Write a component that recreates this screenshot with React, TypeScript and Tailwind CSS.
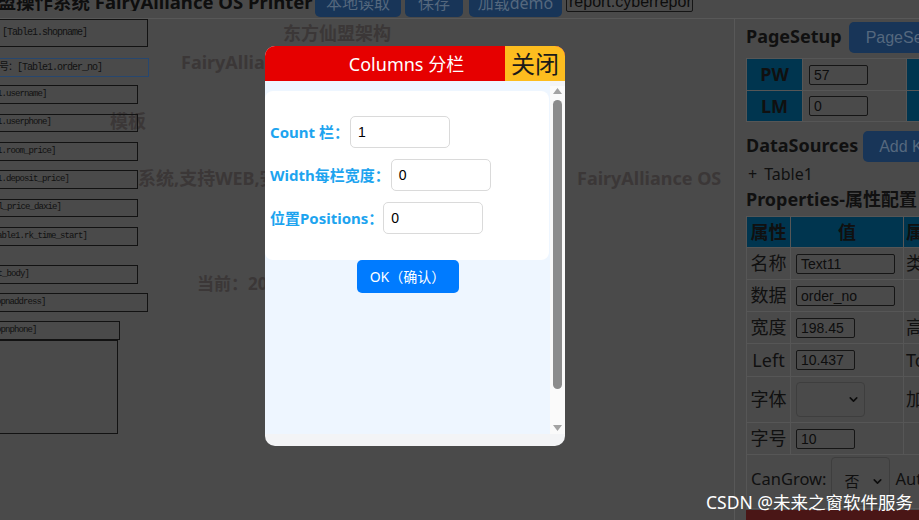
import React from "react";
import { ChevronDown } from "lucide-react";

type Box = { l: number; t: number; w: number; h: number; text: string; fs: number; blue?: boolean; top?: boolean };

const boxes: Box[] = [
  { l: -1, t: 19, w: 149, h: 28, text: "[Table1.shopname]", fs: 10, top: true },
  { l: -22, t: 58, w: 171, h: 19, text: "订单号：[Table1.order_no]", fs: 10, blue: true },
  { l: -33, t: 85, w: 171, h: 19, text: "[Table1.username]", fs: 9 },
  { l: -33, t: 114, w: 171, h: 18, text: "[Table1.userphone]", fs: 9 },
  { l: -33, t: 142, w: 171, h: 19, text: "[Table1.room_price]", fs: 9 },
  { l: -33, t: 170, w: 171, h: 19, text: "[Table1.deposit_price]", fs: 9 },
  { l: -59, t: 199, w: 197, h: 18, text: "[Table1.total_price_daxie]", fs: 9 },
  { l: -15, t: 227, w: 153, h: 19, text: "[Table1.rk_time_start]", fs: 9 },
  { l: -55, t: 265, w: 193, h: 19, text: "[Table1.rent_body]", fs: 9 },
  { l: -52, t: 293, w: 200, h: 19, text: "[Table1.shopnaddress]", fs: 9 },
  { l: -52, t: 321, w: 172, h: 19, text: "[Table1.shopnphone]", fs: 9 },
  { l: -52, t: 340, w: 170, h: 94, text: "", fs: 9 },
];

type Lbl = { l: number; t: number; text: string; fs: number };
const labels: Lbl[] = [
  { l: 283, t: 24, text: "东方仙盟架构", fs: 18 },
  { l: 181, t: 53, text: "FairyAlliance OS 东方仙盟", fs: 18 },
  { l: 110, t: 112, text: "模板", fs: 18 },
  { l: 138, t: 169, text: "系统,支持WEB,安卓,鸿蒙", fs: 18 },
  { l: 577, t: 169, text: "FairyAlliance OS", fs: 18 },
  { l: 197, t: 275, text: "当前：2024", fs: 17 },
];

const sans = "font-['Noto_Sans','Noto_Sans_CJK_SC',sans-serif]";

function PInput({ v, w }: { v: string; w: number }) {
  return (
    <div
      className="h-[20px] border border-[#151515] rounded-[2px] pl-[4px] text-[14px] leading-[18px] text-[#0d0d0d] overflow-hidden whitespace-nowrap font-['Liberation_Sans',sans-serif]"
      style={{ width: w }}
    >
      {v}
    </div>
  );
}

function ModalRow({ label, value, gap }: { label: string; value: string; gap: number }) {
  return (
    <div className="flex items-center">
      <span className="text-[15px] font-bold text-[#1da4ef] whitespace-nowrap">{label}</span>
      <div
        className="w-[100px] h-[32px] border border-[#dadada] rounded-[5px] pl-[7px] flex items-center text-[14px] text-black font-['Liberation_Sans',sans-serif] bg-white"
        style={{ marginLeft: gap }}
      >
        {value}
      </div>
    </div>
  );
}

export default function App() {
  return (
    <div className={`relative w-[919px] h-[520px] overflow-hidden bg-[#4a4a4a] ${sans}`}>
      {/* header bar */}
      <div className="relative h-[19px] border-b border-[#585858] flex items-end overflow-hidden">
        <div className="w-[315px] shrink-0 self-start -mt-[7px] whitespace-nowrap overflow-hidden">
          <span className="block -ml-[58px] text-[18.5px] leading-[18px] font-bold text-[#0e0e0e]">
            东方仙盟操作系统 FairyAlliance OS Printer
          </span>
        </div>
        <div className="flex items-end gap-[4px] mb-[1px]">
          <div className="w-[86px] h-[30px] rounded-[5px] bg-[#183558] text-[#55687e] text-[16px] leading-[16px] flex items-end justify-center pb-[6px]">本地读取</div>
          <div className="w-[58px] h-[30px] rounded-[5px] bg-[#183558] text-[#55687e] text-[16px] leading-[16px] flex items-end justify-center pb-[6px] mr-[2px]">保存</div>
          <div className="w-[93px] h-[30px] rounded-[5px] bg-[#183558] text-[#55687e] text-[16px] leading-[16px] flex items-end justify-center pb-[6px]">加载demo</div>
        </div>
        <div className="self-start -mt-[8px] ml-[4px] w-[127px] h-[20px] border border-[#151515] rounded-[2px] pl-[2px] text-[16px] leading-[18px] text-[#0d0d0d] overflow-hidden whitespace-nowrap font-['Liberation_Sans',sans-serif]">
          report.cyberreport
        </div>
      </div>

      <div className="flex h-[501px]">
        {/* canvas */}
        <div className="relative w-[734px] h-full overflow-hidden">
          {labels.map((b, i) => (
            <div
              key={i}
              className="absolute whitespace-nowrap font-bold leading-none text-[#3b3737]"
              style={{ left: b.l, top: b.t - 19, fontSize: b.fs }}
            >
              {b.text}
            </div>
          ))}
          {boxes.map((b, i) => (
            <div
              key={i}
              className={`absolute border ${b.blue ? "border-[#27476f]" : "border-[#121212]"} flex ${b.top ? "items-start pt-[5px]" : "items-center"} pl-[2px] overflow-hidden whitespace-nowrap text-[#111] font-['Liberation_Mono','Noto_Sans_CJK_SC',monospace]`}
              style={{
                left: b.l,
                top: b.t - 19,
                width: b.w,
                height: b.h,
                fontSize: b.fs,
                letterSpacing: b.fs === 10 ? -1 : -0.9,
              }}
            >
              {b.text}
            </div>
          ))}
        </div>

        {/* right panel */}
        <div className="flex-1 border-l border-[#585858] pl-[11px] overflow-hidden text-[#101010]">
          <div className="mt-[3px] h-[31px] flex items-center whitespace-nowrap">
            <span className="text-[18px] font-bold -mt-[3px]">PageSetup</span>
            <div className="ml-[7px] h-[31px] px-[17px] rounded-[5px] bg-[#183558] text-[#55687e] text-[16px] flex items-center font-['Liberation_Sans',sans-serif]">PageSet</div>
          </div>
          <div className="mt-[5px] w-[240px] grid grid-cols-[56px_104px_80px] border-t border-l border-[#565656]">
            <div className="h-[32px] bg-[#00354f] border-r border-b border-[#565656] flex items-center justify-center text-[18px] font-bold">PW</div>
            <div className="h-[32px] border-r border-b border-[#565656] flex items-center pl-[6px]"><PInput v="57" w={59} /></div>
            <div className="h-[32px] bg-[#00354f] border-b border-[#565656]"></div>
            <div className="h-[31px] bg-[#00354f] border-r border-b border-[#565656] flex items-center justify-center text-[18px] font-bold">LM</div>
            <div className="h-[31px] border-r border-b border-[#565656] flex items-center pl-[6px]"><PInput v="0" w={59} /></div>
            <div className="h-[31px] bg-[#00354f] border-b border-[#565656]"></div>
          </div>
          <div className="mt-[9px] h-[31px] flex items-center whitespace-nowrap">
            <span className="text-[18px] font-bold -mt-[2px]">DataSources</span>
            <div className="ml-[5px] h-[31px] px-[16px] rounded-[5px] bg-[#183558] text-[#55687e] text-[16px] flex items-center font-['Liberation_Sans',sans-serif]">Add Key</div>
          </div>
          <div className="h-[23px] flex items-center pl-[2px] text-[16px] whitespace-nowrap">
            <span>+</span>
            <span className="ml-[7px]">Table1</span>
          </div>
          <div className="h-[29px] flex items-center text-[18px] font-bold whitespace-nowrap">Properties-属性配置</div>
          <div className="mt-[2px] w-[260px] grid grid-cols-[44px_113px_103px] border-t border-l border-[#565656] text-[18px]">
            <div className="h-[31px] bg-[#00354f] border-r border-b border-[#565656] flex items-center justify-center font-bold">属性</div>
            <div className="h-[31px] bg-[#00354f] border-r border-b border-[#565656] flex items-center justify-center font-bold">值</div>
            <div className="h-[31px] bg-[#00354f] border-b border-[#565656] flex items-center pl-[2px] font-bold">属性</div>

            <div className="h-[32px] border-r border-b border-[#565656] flex items-center justify-center">名称</div>
            <div className="h-[32px] border-r border-b border-[#565656] flex items-center pl-[5px]"><PInput v="Text11" w={99} /></div>
            <div className="h-[32px] border-b border-[#565656] flex items-center pl-[2px]">类型</div>

            <div className="h-[32px] border-r border-b border-[#565656] flex items-center justify-center">数据</div>
            <div className="h-[32px] border-r border-b border-[#565656] flex items-center pl-[5px]"><PInput v="order_no" w={99} /></div>
            <div className="h-[32px] border-b border-[#565656]"></div>

            <div className="h-[32px] border-r border-b border-[#565656] flex items-center justify-center">宽度</div>
            <div className="h-[32px] border-r border-b border-[#565656] flex items-center pl-[5px]"><PInput v="198.45" w={59} /></div>
            <div className="h-[32px] border-b border-[#565656] flex items-center pl-[2px]">高度</div>

            <div className="h-[33px] border-r border-b border-[#565656] flex items-center justify-center">Left</div>
            <div className="h-[33px] border-r border-b border-[#565656] flex items-center pl-[5px]"><PInput v="10.437" w={59} /></div>
            <div className="h-[33px] border-b border-[#565656] flex items-center pl-[2px]">Top</div>

            <div className="h-[46px] border-r border-b border-[#565656] flex items-center justify-center">字体</div>
            <div className="h-[46px] border-r border-b border-[#565656] flex items-center pl-[5px]">
              <div className="w-[69px] h-[35px] border border-[#3e3e3e] rounded-[4px] flex items-center justify-end pr-[4px]">
                <ChevronDown size={13} strokeWidth={3} color="#0d0d0d" />
              </div>
            </div>
            <div className="h-[46px] border-b border-[#565656] flex items-center pl-[2px]">加粗</div>

            <div className="h-[32px] border-r border-b border-[#565656] flex items-center justify-center">字号</div>
            <div className="h-[32px] border-r border-b border-[#565656] flex items-center pl-[5px]"><PInput v="10" w={59} /></div>
            <div className="h-[32px] border-b border-[#565656]"></div>

            <div className="col-span-3 h-[54px] border-b border-[#565656] flex items-center pl-[4px] whitespace-nowrap text-[16.5px] -mt-0">
              <span className="-mt-[4px]">CanGrow:</span>
              <div className="ml-[5px] w-[59px] h-[49px] border border-[#3e3e3e] rounded-[4px] flex items-center justify-between pl-[12px] pr-[5px] text-[15px]">
                <span>否</span>
                <ChevronDown size={13} strokeWidth={3} color="#0d0d0d" />
              </div>
              <span className="ml-[5px] -mt-[4px]">AutoShrink</span>
            </div>
          </div>
          <div className="mt-[1px] h-[12px] bg-[#4a1616]"></div>
        </div>
      </div>

      {/* modal */}
      <div className="absolute left-[265px] top-[46px] w-[300px] h-[400px] rounded-[10px] overflow-hidden bg-[#f3f4f6] flex flex-col">
        <div className="relative h-[35px] shrink-0 bg-[#e60000] flex items-center justify-center pr-[17px]">
          <span className="text-white text-[18px] leading-none">Columns 分栏</span>
          <div className="absolute right-0 top-0 h-[35px] w-[60px] bg-[#fdbd1f] text-[24px] text-[#1a1a1a] flex items-center justify-center">关闭</div>
        </div>
        <div className="flex h-[353px] shrink-0">
          <div className="w-[285px] bg-[#eef6ff] pt-[10px] flex flex-col items-center">
            <div className="w-[284px] self-start bg-white rounded-[8px] pt-[25px] pb-[26px] pl-[5px] flex flex-col gap-[11px]">
              <ModalRow label="Count 栏：" value="1" gap={1} />
              <ModalRow label="Width每栏宽度：" value="0" gap={1} />
              <ModalRow label="位置Positions：" value="0" gap={0} />
            </div>
            <div className="w-[102px] h-[33px] rounded-[5px] bg-[#007bff] text-white text-[14px] flex items-center justify-center">OK（确认）</div>
          </div>
          <div className="w-[15px] mt-[5px] bg-[#fafafa] flex flex-col items-center">
            <svg width="9" height="6" viewBox="0 0 9 6" className="mt-[2px]"><path d="M4.5 0 L9 6 L0 6 Z" fill="#a3a3a3" /></svg>
            <div className="mt-[6px] w-[9px] h-[289px] rounded-full bg-[#8c8c8c]"></div>
            <svg width="9" height="6" viewBox="0 0 9 6" className="mt-[36px]"><path d="M0 0 L9 0 L4.5 6 Z" fill="#a3a3a3" /></svg>
          </div>
        </div>
      </div>

      {/* watermark */}
      <div className="absolute left-[706px] top-[494px] text-white text-[17.5px] leading-none whitespace-nowrap font-['Noto_Sans','Noto_Sans_CJK_SC',sans-serif]">
        CSDN @未来之窗软件服务
      </div>
    </div>
  );
}
